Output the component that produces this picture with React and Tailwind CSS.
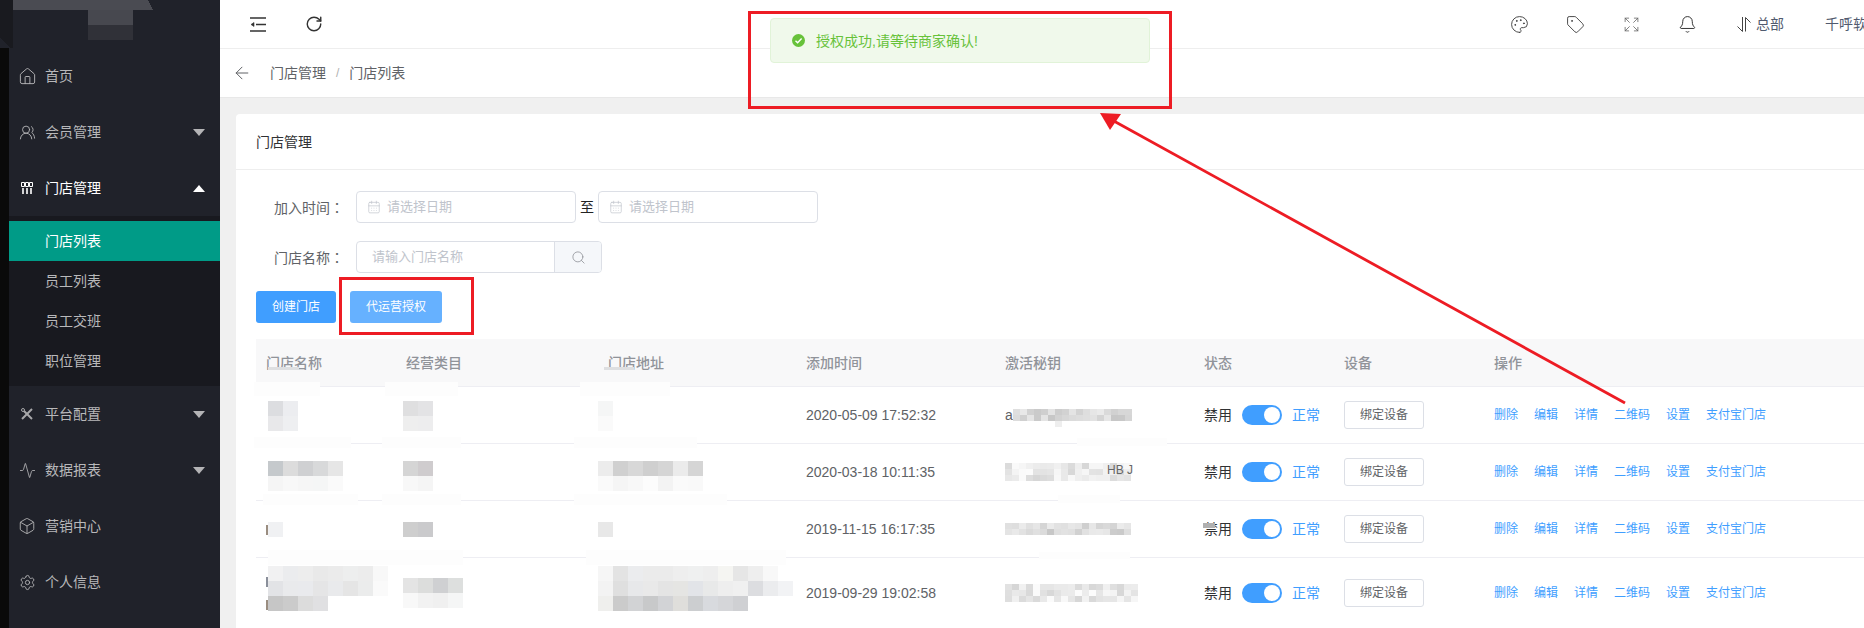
import React from "react";
import { House, UsersRound, Activity, Box, Settings, Palette, Tag, Expand, Bell, RotateCw, ArrowLeft, CalendarDays, Search } from "lucide-react";

function Mosaic({ cells, w = 15, h = 15, className = "" }) {
  const cols = Math.max(...cells.map((r) => r.length));
  return (
    <svg width={cols * w} height={cells.length * h} shapeRendering="crispEdges" className={"block shrink-0 " + className}>
      {cells.map((row, y) => row.map((c, x) => <rect key={x} x={x * w} y={y * h} width={w} height={h} fill={"#" + c} />))}
    </svg>
  );
}

function keyCells(seed, cols, rows, light) {
  let s = seed;
  const out = [];
  for (let y = 0; y < rows; y++) {
    const row = [];
    for (let x = 0; x < cols; x++) {
      s = (s * 9301 + 49297) % 233280;
      const v = Math.round((light ? 214 : 198) + (s / 233280) * 38);
      const hx = v.toString(16).padStart(2, "0");
      row.push(hx + hx + hx);
    }
    out.push(row);
  }
  return out;
}

function Caret({ up, active }) {
  return (
    <svg width="12" height="7" viewBox="0 0 12 7" className="ml-auto mr-[15px]">
      <path d={up ? "M6 0 12 7H0Z" : "M0 0H12L6 7Z"} fill={active ? "#ffffff" : "#b4b4b6"} />
    </svg>
  );
}

function StoreIcon() {
  return (
    <svg width="12" height="12" viewBox="0 0 12 12" fill="none" stroke="#fff" className="shrink-0">
      <path d="M.5.5h3v4h-3zM4.5.5h3v4h-3zM8.5.5h3v4h-3z" strokeWidth="1" />
      <path d="M2 6v6M6 6v6M10 6v6" strokeWidth="1.6" />
    </svg>
  );
}

function ToolIcon() {
  return (
    <svg width="12" height="12" viewBox="0 0 12 12" fill="none" stroke="#a8a8aa" className="shrink-0">
      <path d="M1.5 1.5 11 11" strokeWidth="2" />
      <path d="M11 1 1 11" strokeWidth="2" />
      <circle cx="2" cy="2" r="1.5" fill="#20222a" strokeWidth="1" />
    </svg>
  );
}

function MenuItem({ icon, label, caret, up, active }) {
  return (
    <div className={"flex h-14 items-center pl-[11px] text-sm " + (active ? "text-white" : "text-[#b8b8ba]")}>
      <span className="mr-[11px] flex w-[14px] shrink-0 items-center justify-center">{icon}</span>
      <span>{label}</span>
      {caret && <Caret up={up} active={active} />}
    </div>
  );
}

function SubItem({ label, active }) {
  return (
    <div className={"flex h-10 items-center pl-9 text-sm " + (active ? "bg-[#009b87] text-white" : "text-[#b8b8ba]")}>{label}</div>
  );
}

function Sidebar() {
  const ic = "#b4b4b6";
  return (
    <aside className="flex w-[220px] shrink-0 flex-col bg-[#0a0a0a]">
      <svg width="220" height="48" shapeRendering="crispEdges" className="block shrink-0">
        <rect x="0" y="0" width="220" height="48" fill="#20222a" />
        <path d="M0 0H13V50L0 38Z" fill="#191a1f" />
        <path d="M13 0H148L153 10H13Z" fill="#4a4b52" />
        <rect x="88" y="10" width="45" height="15" fill="#47484f" />
        <rect x="88" y="25" width="45" height="15" fill="#303138" />
      </svg>
      <div className="ml-[9px] flex flex-1 flex-col bg-[#20222a]">
        <MenuItem icon={<House size={19} strokeWidth={1.2} color={ic} className="shrink-0" />} label="首页" />
        <MenuItem icon={<UsersRound size={17} strokeWidth={1.3} color={ic} className="shrink-0" />} label="会员管理" caret />
        <MenuItem icon={<StoreIcon />} label="门店管理" caret up active />
        <div className="bg-[#18191f] py-[5px]">
          <SubItem label="门店列表" active />
          <SubItem label="员工列表" />
          <SubItem label="员工交班" />
          <SubItem label="职位管理" />
        </div>
        <MenuItem icon={<ToolIcon />} label="平台配置" caret />
        <MenuItem icon={<Activity size={17} strokeWidth={1.2} color={ic} className="shrink-0" />} label="数据报表" caret />
        <MenuItem icon={<Box size={18} strokeWidth={1.2} color={ic} className="shrink-0" />} label="营销中心" />
        <MenuItem icon={<Settings size={17} strokeWidth={1.3} color={ic} className="shrink-0" />} label="个人信息" />
      </div>
    </aside>
  );
}

function FoldIcon() {
  return (
    <svg width="16" height="15" viewBox="0 0 16 15" fill="none" stroke="#333" strokeWidth="1.4">
      <path d="M0 1h16M6 7.5h10M0 14h16" />
      <path d="M1 7.5 4 5.5v4Z" fill="#333" strokeWidth="0.6" />
    </svg>
  );
}

function SwitchIcon() {
  return (
    <svg width="14" height="15" viewBox="0 0 14 15" fill="none" stroke="#444" strokeWidth="1" className="block">
      <path d="M5.5 0v14.5L.5 9.5" />
      <path d="M8.5 14.5V.5l5 5" />
    </svg>
  );
}

function Header() {
  const c = "#3a3a3a";
  return (
    <header className="flex h-[49px] shrink-0 items-center border-b border-[#eeeeee] bg-white pl-[30px]">
      <FoldIcon />
      <RotateCw size={18} strokeWidth={1.9} color="#333" className="ml-[39px]" />
      <div className="ml-auto mr-[-17px] flex items-center text-sm text-[#515a6e]">
        <Palette size={19} strokeWidth={1.15} color={c} />
        <Tag size={19} strokeWidth={1.15} color={c} className="ml-[37px]" />
        <Expand size={17} strokeWidth={1.15} color="#666" className="mx-[38px]" />
        <Bell size={19} strokeWidth={1.15} color="#222" />
        <span className="ml-10"><SwitchIcon /></span>
        <span className="ml-[5px]">总部</span>
        <span className="ml-[41px] whitespace-nowrap">千呼软件</span>
      </div>
    </header>
  );
}

function DateInput({ w }) {
  return (
    <div className={"flex h-8 items-center gap-1.5 rounded border border-[#dcdfe6] bg-white pl-2.5 text-[13px] text-[#c0c4cc] " + w}>
      <CalendarDays size={14} strokeWidth={1.2} color="#c0c4cc" />
      <span>请选择日期</span>
    </div>
  );
}

function FieldLabel({ text }) {
  return (
    <label className="w-[100px] pl-[18px] text-sm text-[#606266]">
      {text}
      <span className="font-['Noto_Sans_CJK_TC',sans-serif]">：</span>
    </label>
  );
}

function Filters() {
  return (
    <div className="flex flex-col gap-[18px] pl-5 pt-[21px]">
      <div className="flex items-center">
        <FieldLabel text="加入时间" />
        <DateInput w="w-[220px]" />
        <span className="mx-1 text-sm text-[#222]">至</span>
        <DateInput w="w-[220px]" />
      </div>
      <div className="flex items-center">
        <FieldLabel text="门店名称" />
        <div className="flex h-8 w-[246px] overflow-hidden rounded border border-[#dcdfe6] bg-white">
          <div className="flex flex-1 items-center pl-[15px] text-[13px] text-[#c0c4cc]">请输入门店名称</div>
          <div className="flex w-[47px] items-center justify-center border-l border-[#dcdfe6] bg-[#f5f7fa]">
            <Search size={15} strokeWidth={1.3} color="#909399" />
          </div>
        </div>
      </div>
      <div className="flex gap-3.5">
        <button className="h-8 w-20 rounded-[3px] bg-[#409eff] text-xs text-white">创建门店</button>
        <button className="h-8 w-[92px] rounded-[3px] bg-[#66b1ff] text-xs text-white">代运营授权</button>
      </div>
    </div>
  );
}

const gridCols = "grid grid-cols-[140px_202px_198px_199px_199px_140px_150px_1fr]";

const firstKey = keyCells(11, 17, 2, false).concat([["ffffff", "ffffff", "ffffff", "ffffff", "ffffff", "ffffff", "eeeeee"]]);

const rows = [
  {
    h: "h-[57px]",
    name: { c: [["dcdde0", "ecedf0"], ["e8e8ea", "eeeff1"]], cls: "ml-[2px] mt-px" },
    cat: { c: [["dfdfe0", "e3e3e5"], ["eeeeee", "ededee"]], cls: "ml-[-3px] mt-px" },
    addr: { c: [["f5f6f6"], ["fafafa"]], cls: "ml-[-10px] mt-px" },
    date: "2020-05-09 17:52:32",
    key: <><span className="mr-0">a</span><Mosaic cells={firstKey} w={7} h={6} className="mt-[6px]" /></>,
  },
  {
    h: "h-[57px]",
    name: { c: [["c5c9cc", "dcdcdc", "cfd0d2", "d8d9da", "e6e6e6"], ["f5f5f5", "f8f8f8", "f6f6f6", "f5f6f6", "fafafa"]], cls: "ml-[2px] mt-[7px]" },
    cat: { c: [["d5d5d5", "cfccce"], ["f8f8f8", "f5f5f5"]], cls: "ml-[-3px] mt-[7px]" },
    addr: { c: [["ececec", "d0d0d0", "d8d8d8", "cfcfcf", "d5d5d5", "ebebeb", "d5d5d5"], ["fafafa", "f5f5f5", "f8f8f8", "fcfcfc", "f3f3f3", "fafafa", "f9f9f9"]], cls: "ml-[-10px] mt-[7px]" },
    date: "2020-03-18 10:11:35",
    key: (
      <span className="relative block">
        <Mosaic cells={keyCells(23, 18, 3, true)} w={7} h={6} />
        <span className="absolute left-[102px] top-[1px] whitespace-nowrap text-xs leading-none text-[#666]">HB J</span>
      </span>
    ),
  },
  {
    h: "h-[57px]",
    name: { c: [["f0f1f3"]], cls: "ml-[2px]" },
    cat: { c: [["cecece", "cacacc"]], cls: "ml-[-3px]" },
    addr: { c: [["e8e8e8"]], cls: "ml-[-10px]" },
    date: "2019-11-15 16:17:35",
    key: <Mosaic cells={keyCells(37, 18, 2, false)} w={7} h={6} />,
  },
  {
    h: "h-[71px]",
    name: {
      c: [
        ["f1f1f2", "ebecee", "ededed", "e9e9e9", "ebebeb", "edeeee", "ececec", "f8f8f8"],
        ["e2e3e6", "e9eaec", "e9eaed", "e5e5e6", "e9eaec", "e5e5e5", "ebecec", "fafafa"],
        ["c6c6c6", "cbcbcb", "dcdcdc", "e0e0e2", "ffffff", "ffffff", "ffffff", "ffffff"],
      ],
      cls: "ml-[2px] mt-[-10px]",
    },
    cat: { c: [["e4e4e4", "dcdddc", "cfd0d2", "dddfde"], ["f8f8f8", "f2f2f2", "f0f0f0", "f5f6f6"]], cls: "ml-[-3px]" },
    addr: {
      c: [
        ["f6f6f6", "e3e3e3", "ebecee", "ebebeb", "ebebeb", "eeeeee", "eff0f0", "eeeeee", "f5f5f2", "e6e6e6", "eeeeee", "f8f8f8", "ffffff"],
        ["f3f3f3", "dfdfdf", "e7e8ea", "e9e9e9", "e4e4e4", "e5e5e3", "e2e4e8", "e8e9e9", "eeeeee", "f0f0f0", "dcdde0", "ebecee", "f2f3f5"],
        ["efefed", "cbcbcb", "d2d3d5", "c8c9ca", "d2d3d6", "dfdedb", "ccced0", "d8dade", "d5d6d9", "cfd0d3", "ffffff", "ffffff", "ffffff"],
      ],
      cls: "ml-[-10px] mt-[-10px]",
    },
    date: "2019-09-29 19:02:58",
    key: <Mosaic cells={keyCells(53, 19, 3, true)} w={7} h={6} />,
  },
];

function Row({ r }) {
  const cell = "flex items-center pl-2.5";
  return (
    <div className={gridCols + " border-b border-[#eeeef3] " + r.h}>
      <div className={cell}><Mosaic cells={r.name.c} className={r.name.cls} /></div>
      <div className={cell}><Mosaic cells={r.cat.c} className={r.cat.cls} /></div>
      <div className={cell}><Mosaic cells={r.addr.c} className={r.addr.cls} /></div>
      <div className={cell + " text-sm text-[#606266]"}>{r.date}</div>
      <div className={cell + " text-sm text-[#606266]"}>{r.key}</div>
      <div className={cell + " text-sm"}>
        <span className="text-[#303133]">禁用</span>
        <span className="relative mx-2.5 inline-block h-5 w-10 rounded-full bg-[#409eff]">
          <span className="absolute right-[2px] top-[2px] h-4 w-4 rounded-full bg-white" />
        </span>
        <span className="text-[#409eff]">正常</span>
      </div>
      <div className={cell}>
        <button className="h-7 w-20 rounded-[3px] border border-[#dcdfe6] bg-white text-xs text-[#606266]">绑定设备</button>
      </div>
      <div className={cell + " gap-4 whitespace-nowrap text-xs text-[#409eff]"}>
        <span>删除</span><span>编辑</span><span>详情</span><span>二维码</span><span>设置</span><span>支付宝门店</span>
      </div>
    </div>
  );
}

function Table() {
  const heads = ["门店名称", "经营类目", "门店地址", "添加时间", "激活秘钥", "状态", "设备", "操作"];
  return (
    <div className="mt-4 pl-5">
      <div className={gridCols + " h-[48px] border-b border-[#eeeef3] bg-[#f8f8f9]"}>
        {heads.map((h) => (
          <div key={h} className="flex items-center pl-2.5 text-sm font-medium text-[#909399]">{h}</div>
        ))}
      </div>
      {rows.map((r) => <Row key={r.date} r={r} />)}
    </div>
  );
}

function Annotations() {
  const smudges = [
    [254, 382, 66, 14], [385, 382, 73, 14], [580, 382, 90, 14],
    [254, 437, 97, 11], [382, 437, 79, 11], [574, 437, 123, 11], [1077, 438, 90, 8],
    [263, 494, 95, 11], [382, 494, 79, 11], [574, 494, 153, 11], [1058, 495, 62, 8],
    [268, 550, 195, 15], [586, 550, 200, 15], [1039, 552, 91, 7],
  ];
  return (
    <>
      <svg width="1864" height="628" shapeRendering="crispEdges" className="pointer-events-none absolute left-0 top-0">
        {smudges.map(([x, y, w, h]) => <rect key={x + "-" + y} x={x} y={y} width={w} height={h} fill="#fdfdfd" />)}
        <rect x="268" y="367" width="31" height="3" fill="#dedfe1" />
        <rect x="604" y="367" width="30" height="3" fill="#dedfe1" />
        <rect x="266" y="525" width="2" height="10" fill="#9a8d80" />
        <rect x="266" y="577" width="2" height="10" fill="#8a8f9a" />
        <rect x="266" y="600" width="2" height="10" fill="#9a8d80" />
        <rect x="1203" y="523" width="12" height="5" fill="#b0b0b0" />
      </svg>
      <div className="absolute left-[770px] top-[18px] flex h-[45px] w-[380px] items-center gap-[11px] rounded border border-[#e1f3d8] bg-[#f0f9eb] pl-[21px] text-sm text-[#67c23a]">
        <svg width="13" height="13" viewBox="0 0 13 13">
          <circle cx="6.5" cy="6.5" r="6.5" fill="#67c23a" />
          <path d="M3.5 6.7 5.6 8.7 9.6 4.6" fill="none" stroke="#fff" strokeWidth="1.4" />
        </svg>
        <span>授权成功,请等待商家确认!</span>
      </div>
      <div className="absolute left-[748px] top-[11px] h-[98px] w-[424px] border-[3px] border-[#ed1c24]" />
      <div className="absolute left-[339px] top-[277px] h-[58px] w-[135px] border-[3px] border-[#ed1c24]" />
      <svg width="1864" height="628" className="pointer-events-none absolute left-0 top-0">
        <path d="M1625 403 1112 120" stroke="#ed1c24" strokeWidth="2.8" fill="none" />
        <path d="M1100 113 1121 114 1110 130Z" fill="#ed1c24" />
      </svg>
    </>
  );
}

export default function App() {
  return (
    <div className="relative flex h-[628px] w-[1864px] overflow-hidden bg-[#f0f0f0] font-['Liberation_Sans','Noto_Sans_CJK_SC',sans-serif]">
      <Sidebar />
      <main className="flex min-w-0 flex-1 flex-col">
        <Header />
        <div className="flex h-[49px] shrink-0 items-center border-b border-[#e8e8e8] bg-white pl-3 text-sm text-[#606266]">
          <ArrowLeft size={20} strokeWidth={1.2} color="#606266" />
          <span className="ml-[18px]">门店管理</span>
          <span className="mx-[10px] text-xs text-[#b0b0b0]">/</span>
          <span>门店列表</span>
        </div>
        <div className="flex-1 pl-4 pt-4">
          <section className="h-full rounded-tl bg-white">
            <div className="flex h-14 items-center border-b border-[#eeeeee] pl-5 text-sm text-[#303133]">门店管理</div>
            <Filters />
            <Table />
          </section>
        </div>
      </main>
      <Annotations />
    </div>
  );
}
